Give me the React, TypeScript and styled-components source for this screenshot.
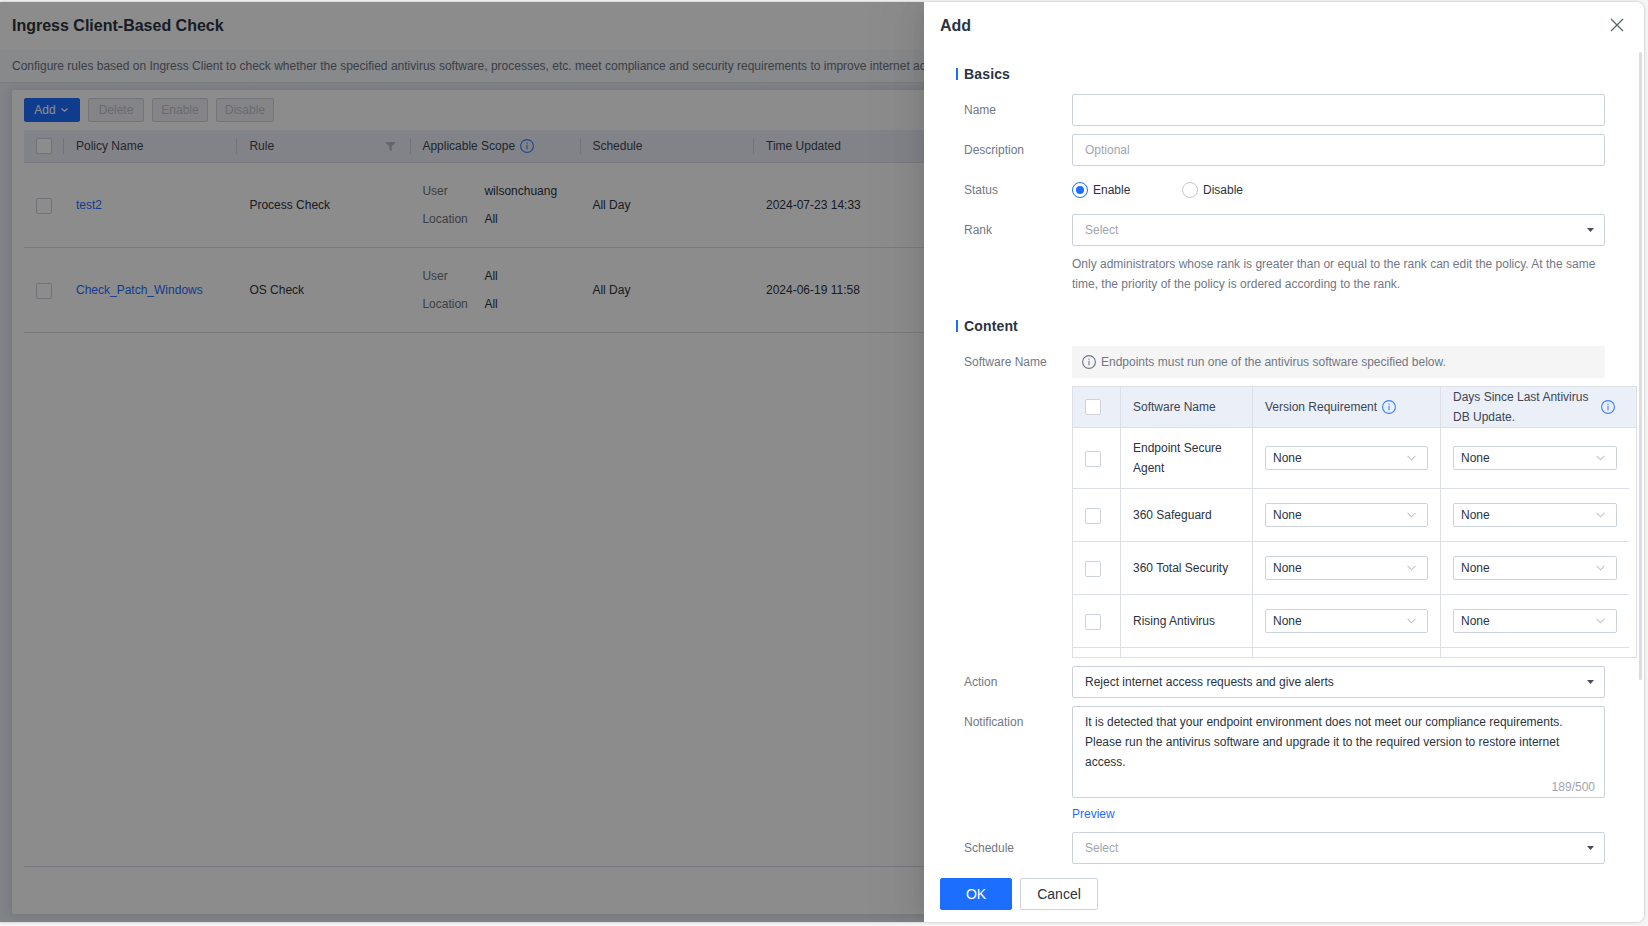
import React from 'react';
import styled, { createGlobalStyle, css } from 'styled-components';

const GlobalStyle = createGlobalStyle`
  * { box-sizing: border-box; }
  html, body { margin: 0; padding: 0; }
  body {
    width: 1648px;
    height: 926px;
    overflow: hidden;
    background: #f5f5f5;
    color: #2b3340;
    font-family: "Liberation Sans", Arial, sans-serif;
    font-size: 12px;
    line-height: 20px;
  }
  button, input, textarea { font: inherit; color: inherit; }
`;

const Page = styled.div`
  width: 1648px;
  height: 926px;
  padding: 2px 4px 4px 0;
`;

const Frame = styled.div`
  position: relative;
  height: 920px;
  overflow: hidden;
  border-radius: 0 8px 8px 0;
  display: flex;
  flex-direction: column;
`;

const Shell = styled.div`
  border-radius: 0 8px 8px 0;
  box-shadow: 0 0 3px rgba(0, 0, 0, 0.28);
`;

const Main = styled.main`
  width: 1600px;
  height: 920px;
  background: #ebeef6;
  display: flex;
  flex-direction: column;
`;

const PageTitle = styled.h1`
  flex: none;
  margin: 0;
  height: 48px;
  padding: 0 12px;
  background: #fff;
  font-size: 16px;
  line-height: 47px;
`;

const PageNote = styled.div`
  flex: none;
  height: 33px;
  padding: 0 12px;
  background: #f7f9fc;
  border-bottom: 1px solid #e1e4ea;
  line-height: 32px;
  color: #6b7280;
  white-space: nowrap;
`;

const Card = styled.section`
  flex: 1;
  margin: 7px 12px 8px;
  padding: 8px 12px 0;
  background: #fff;
  border-radius: 2px;
  box-shadow: 0 0 12px rgba(40, 45, 80, 0.16);
  display: flex;
  flex-direction: column;
`;

const Toolbar = styled.div`
  display: flex;
  gap: 8px;
  margin-bottom: 8px;
`;

const ToolButton = styled.button<{ $primary?: boolean; $width: number }>`
  display: flex;
  align-items: center;
  justify-content: center;
  gap: 5px;
  width: ${(p) => p.$width}px;
  height: 24px;
  padding: 0;
  border-radius: 2px;
  border: 1px solid #d0d5df;
  background: #f0f1f4;
  color: #bfc3cc;
  ${(p) => p.$primary && css`
    padding-right: 2px;
    border-color: #1c6eff;
    background: #1c6eff;
    color: #fff;
  `}
`;

const policyColumns = '40px 173px 174px 170px 173px 1fr';

const PolicyHead = styled.div`
  display: grid;
  grid-template-columns: ${policyColumns};
  height: 33px;
  align-items: center;
  background: #edeff7;
  border-bottom: 1px solid #dcdfe8;
  border-radius: 2px 2px 0 0;
  color: #3d4554;
`;

const HeadCell = styled.div`
  display: flex;
  align-items: center;
  gap: 5px;
  height: 16px;
  padding: 0 15px 0 12px;
  border-right: 1px solid #cfd3dc;
  &:last-child { border-right: 0; }
`;

const CheckHeadCell = styled(HeadCell)`
  padding: 0;
`;

const FilterHeadCell = styled(HeadCell)`
  justify-content: space-between;
  padding-left: 12.4px;
`;

const ScopeHeadCell = styled(HeadCell)`
  padding-left: 11.4px;
`;

const PolicyRow = styled.div`
  display: grid;
  grid-template-columns: ${policyColumns};
  height: 85px;
  align-items: center;
  border-bottom: 1px solid #dcdfe5;
`;

const Cell = styled.div<{ $left?: number }>`
  padding-left: ${(p) => p.$left ?? 12}px;
`;

const PolicyLink = styled.a`
  color: #1c6eff;
`;

const Scope = styled.dl`
  display: grid;
  grid-template-columns: 62px 1fr;
  row-gap: 8px;
  margin: 0;
  dt { color: #6b7280; }
  dd { margin: 0; }
`;

const CardFooter = styled.div`
  margin-top: auto;
  height: 48px;
  border-top: 1px solid #d9dbe5;
`;

const CheckBox = styled.span<{ $low?: boolean; $left?: number }>`
  display: block;
  flex: none;
  width: 16px;
  height: 16px;
  margin-left: ${(p) => p.$left ?? 12}px;
  margin-top: ${(p) => (p.$low ? 2 : 0)}px;
  border: 1px solid #cdd2dc;
  border-radius: 2px;
  background: #fff;
`;

const Mask = styled.div`
  position: absolute;
  inset: 0;
  background: linear-gradient(to right, rgba(0, 0, 0, 0.45) 1600px, #fff 1600px);
  display: flex;
  justify-content: flex-end;
`;

const Drawer = styled.aside`
  width: 720px;
  height: 920px;
  background: #fff;
  box-shadow: -6px 0 16px -8px rgba(0, 0, 0, 0.08), -9px 0 28px 0 rgba(0, 0, 0, 0.05),
    -12px 0 48px 16px rgba(0, 0, 0, 0.03);
  display: flex;
  flex-direction: column;
`;

const DrawerHead = styled.header`
  flex: none;
  display: flex;
  align-items: flex-start;
  justify-content: space-between;
  height: 48px;
  padding: 0 20.5px 0 16px;
  h2 { margin: 0; font-size: 16px; line-height: 47px; }
  svg { margin-top: 16.4px; }
`;

const DrawerBody = styled.div`
  flex: 1;
  min-height: 0;
  display: flex;
  overflow: hidden;
`;

const Form = styled.form`
  width: 713px;
  flex: none;
  padding: 14px 0 0 32px;
`;

const ScrollTrack = styled.div`
  width: 5px;
  padding: 2px 0 0 2px;
`;

const ScrollThumb = styled.div`
  width: 3px;
  height: 628px;
  border-radius: 2px;
  background: #dcdcde;
`;

const SectionTitle = styled.h3<{ $top?: number }>`
  display: flex;
  align-items: center;
  height: 20px;
  margin: ${(p) => p.$top ?? 0}px 0 10px;
  font-size: 14px;
  letter-spacing: 0.15px;
  &::before {
    content: "";
    width: 2px;
    height: 12px;
    margin-right: 6px;
    background: #1c6eff;
  }
`;

const FormRow = styled.div`
  display: flex;
  padding-left: 8px;
  margin-bottom: 8px;
`;

const Label = styled.label`
  flex: none;
  width: 108px;
  line-height: 32px;
  color: #717885;
`;

const Control = styled.div`
  width: 533px;
`;

const TextInput = styled.input`
  display: block;
  width: 100%;
  height: 32px;
  padding: 0 12px;
  border: 1px solid #cdd3dd;
  border-radius: 2px;
  background: #fff;
  outline: none;
  &::placeholder { color: #9fa5b1; opacity: 1; }
`;

const SelectBox = styled.div<{ $empty?: boolean }>`
  display: flex;
  align-items: center;
  justify-content: space-between;
  height: 32px;
  padding: 0 10px 0 12px;
  border: 1px solid #cdd3dd;
  border-radius: 2px;
  color: ${(p) => (p.$empty ? '#9fa5b1' : '#2b3340')};
`;

const RadioGroup = styled.div`
  display: flex;
  height: 32px;
`;

const Radio = styled.span`
  display: flex;
  align-items: center;
  gap: 5px;
  width: 110px;
`;

const RadioDot = styled.i<{ $on?: boolean }>`
  display: flex;
  align-items: center;
  justify-content: center;
  width: 16px;
  height: 16px;
  border-radius: 50%;
  border: 1px solid ${(p) => (p.$on ? '#1c6eff' : '#c3c8d2')};
  &::after {
    content: "";
    width: 8px;
    height: 8px;
    border-radius: 50%;
    background: ${(p) => (p.$on ? '#1c6eff' : 'transparent')};
  }
`;

const Help = styled.p`
  margin: 8px 0 0;
  color: #717885;
`;

const Notice = styled.div`
  display: flex;
  align-items: center;
  gap: 5px;
  height: 32px;
  padding-left: 10px;
  background: #f5f5f5;
  border-radius: 2px;
  color: #717885;
`;

const SoftwareTable = styled.div`
  width: 565px;
  height: 272px;
  margin-top: 8px;
  border: 1px solid #dcdfe8;
  overflow: hidden;
`;

const softwareColumns = '48px 132px 188px 188px';

const SoftwareHead = styled.div`
  display: grid;
  grid-template-columns: ${softwareColumns};
  height: 41px;
  background: #ebeff8;
  border-bottom: 1px solid #dcdfe8;
  color: #3d4554;
`;

const SoftwareRow = styled.div<{ $height: number }>`
  display: grid;
  grid-template-columns: ${softwareColumns};
  width: 556px;
  height: ${(p) => p.$height}px;
  border-bottom: 1px solid #dcdfe8;
`;

const SoftwareCell = styled.div`
  display: flex;
  align-items: center;
  gap: 5px;
  padding: 0 12px;
  border-right: 1px solid #dcdfe8;
  &:nth-child(4) { border-right: 0; }
`;

const TallHeadCell = styled(SoftwareCell)`
  justify-content: space-between;
  padding-right: 14px;
  span { width: 140px; margin-right: -5px; }
`;

const MiniSelect = styled.div`
  display: flex;
  align-items: center;
  justify-content: space-between;
  flex: 1;
  height: 24px;
  padding: 0 11.5px 0 7px;
  border: 1px solid #cdd3dd;
  border-radius: 2px;
`;

const NotificationBox = styled.div`
  display: flex;
  flex-direction: column;
  justify-content: space-between;
  height: 92px;
  padding: 5px 9px 0 12px;
  border: 1px solid #cdd3dd;
  border-radius: 2px;
`;

const Counter = styled.span`
  align-self: flex-end;
  color: #9fa5b1;
`;

const Preview = styled.a`
  display: block;
  margin: 6px 0 0;
  color: #1c6eff;
`;

const DrawerFoot = styled.footer`
  flex: none;
  display: flex;
  gap: 8px;
  height: 52px;
  padding: 8px 16px;
`;

const FootButton = styled.button<{ $primary?: boolean }>`
  width: ${(p) => (p.$primary ? 72 : 78)}px;
  height: 32px;
  padding: 0;
  border: 1px solid ${(p) => (p.$primary ? '#1c6eff' : '#cdd3dd')};
  border-radius: 2px;
  background: ${(p) => (p.$primary ? '#1c6eff' : '#fff')};
  color: ${(p) => (p.$primary ? '#fff' : '#2b3340')};
  font-size: 14px;
`;

const IconSvg = styled.svg`
  display: block;
  flex: none;
`;

const InfoIcon = ({ color = '#3b82ff' }: { color?: string }) => (
  <IconSvg width="14" height="14" viewBox="0 0 14 14" fill="none">
    <circle cx="7" cy="7" r="6.4" stroke={color} strokeWidth="1.1" />
    <path d="M7 5.8V10.2M7 3.6V4.8" stroke={color} strokeWidth="1.1" />
  </IconSvg>
);

const Chevron = () => (
  <IconSvg width="9" height="6" viewBox="0 0 9 6" fill="none">
    <path d="M0.6 0.8L4.5 4.8L8.4 0.8" stroke="#bfc4cd" strokeWidth="1.1" />
  </IconSvg>
);

const ButtonChevron = () => (
  <IconSvg width="7" height="4" viewBox="0 0 7 4" fill="none">
    <path d="M0.5 0.5L3.5 3.2L6.5 0.5" stroke="#fff" strokeWidth="1.2" />
  </IconSvg>
);

const Caret = () => (
  <IconSvg width="7" height="4" viewBox="0 0 7 4">
    <path d="M0 0H7L3.5 4Z" fill="#464e5e" />
  </IconSvg>
);

const FilterIcon = () => (
  <IconSvg width="9" height="9" viewBox="0 0 9 9">
    <path d="M0 0H9V1.2L5.8 4.2V9L3.4 8V4.2L0 1.2Z" fill="#b4b9c4" />
  </IconSvg>
);

const CloseIcon = () => (
  <IconSvg width="14" height="14" viewBox="0 0 14 14" fill="none">
    <path d="M1 1L13 13M13 1L1 13" stroke="#5f6673" strokeWidth="1.4" />
  </IconSvg>
);

const policies = [
  { name: 'test2', rule: 'Process Check', user: 'wilsonchuang', updated: '2024-07-23 14:33' },
  { name: 'Check_Patch_Windows', rule: 'OS Check', user: 'All', updated: '2024-06-19 11:58' },
];

const software = [
  { name: 'Endpoint Secure Agent', height: 61 },
  { name: '360 Safeguard', height: 53 },
  { name: '360 Total Security', height: 53 },
  { name: 'Rising Antivirus', height: 53 },
];

function PolicyPage() {
  return (
    <Main>
      <PageTitle>Ingress Client-Based Check</PageTitle>
      <PageNote>
        Configure rules based on Ingress Client to check whether the specified antivirus software,
        processes, etc. meet compliance and security requirements to improve internet access
      </PageNote>
      <Card>
        <Toolbar>
          <ToolButton $primary $width={56}>
            Add <ButtonChevron />
          </ToolButton>
          <ToolButton $width={56}>Delete</ToolButton>
          <ToolButton $width={56}>Enable</ToolButton>
          <ToolButton $width={58}>Disable</ToolButton>
        </Toolbar>
        <PolicyHead>
          <CheckHeadCell><CheckBox /></CheckHeadCell>
          <HeadCell>Policy Name</HeadCell>
          <FilterHeadCell>Rule <FilterIcon /></FilterHeadCell>
          <ScopeHeadCell>Applicable Scope <InfoIcon /></ScopeHeadCell>
          <ScopeHeadCell>Schedule</ScopeHeadCell>
          <HeadCell>Time Updated</HeadCell>
        </PolicyHead>
        {policies.map((p) => (
          <PolicyRow key={p.name}>
            <CheckBox $low />
            <Cell><PolicyLink>{p.name}</PolicyLink></Cell>
            <Cell $left={12.4}>{p.rule}</Cell>
            <Cell $left={11.4}>
              <Scope>
                <dt>User</dt><dd>{p.user}</dd>
                <dt>Location</dt><dd>All</dd>
              </Scope>
            </Cell>
            <Cell $left={11.4}>All Day</Cell>
            <Cell>{p.updated}</Cell>
          </PolicyRow>
        ))}
        <CardFooter />
      </Card>
    </Main>
  );
}

function AddDrawer() {
  return (
    <Drawer>
      <DrawerHead>
        <h2>Add</h2>
        <CloseIcon />
      </DrawerHead>
      <DrawerBody>
        <Form>
          <SectionTitle>Basics</SectionTitle>
          <FormRow>
            <Label>Name</Label>
            <Control><TextInput /></Control>
          </FormRow>
          <FormRow>
            <Label>Description</Label>
            <Control><TextInput placeholder="Optional" /></Control>
          </FormRow>
          <FormRow>
            <Label>Status</Label>
            <Control>
              <RadioGroup>
                <Radio><RadioDot $on />Enable</Radio>
                <Radio><RadioDot />Disable</Radio>
              </RadioGroup>
            </Control>
          </FormRow>
          <FormRow>
            <Label>Rank</Label>
            <Control>
              <SelectBox $empty>Select <Caret /></SelectBox>
              <Help>
                Only administrators whose rank is greater than or equal to the rank can edit the
                policy. At the same time, the priority of the policy is ordered according to the rank.
              </Help>
            </Control>
          </FormRow>
          <SectionTitle $top={22}>Content</SectionTitle>
          <FormRow>
            <Label>Software Name</Label>
            <Control>
              <Notice>
                <InfoIcon color="#717885" />
                Endpoints must run one of the antivirus software specified below.
              </Notice>
              <SoftwareTable>
                <SoftwareHead>
                  <SoftwareCell><CheckBox $left={0} /></SoftwareCell>
                  <SoftwareCell>Software Name</SoftwareCell>
                  <SoftwareCell>Version Requirement <InfoIcon /></SoftwareCell>
                  <TallHeadCell>
                    <span>Days Since Last Antivirus DB Update.</span>
                    <InfoIcon />
                  </TallHeadCell>
                </SoftwareHead>
                {software.map((s) => (
                  <SoftwareRow key={s.name} $height={s.height}>
                    <SoftwareCell><CheckBox $low $left={0} /></SoftwareCell>
                    <SoftwareCell>{s.name}</SoftwareCell>
                    <SoftwareCell><MiniSelect>None <Chevron /></MiniSelect></SoftwareCell>
                    <SoftwareCell><MiniSelect>None <Chevron /></MiniSelect></SoftwareCell>
                  </SoftwareRow>
                ))}
                <SoftwareRow $height={53}>
                  <SoftwareCell />
                  <SoftwareCell />
                  <SoftwareCell />
                  <SoftwareCell />
                </SoftwareRow>
              </SoftwareTable>
            </Control>
          </FormRow>
          <FormRow>
            <Label>Action</Label>
            <Control>
              <SelectBox>Reject internet access requests and give alerts <Caret /></SelectBox>
            </Control>
          </FormRow>
          <FormRow>
            <Label>Notification</Label>
            <Control>
              <NotificationBox>
                <span>
                  It is detected that your endpoint environment does not meet our compliance
                  requirements. Please run the antivirus software and upgrade it to the required
                  version to restore internet access.
                </span>
                <Counter>189/500</Counter>
              </NotificationBox>
              <Preview>Preview</Preview>
            </Control>
          </FormRow>
          <FormRow>
            <Label>Schedule</Label>
            <Control>
              <SelectBox $empty>Select <Caret /></SelectBox>
            </Control>
          </FormRow>
        </Form>
        <ScrollTrack><ScrollThumb /></ScrollTrack>
      </DrawerBody>
      <DrawerFoot>
        <FootButton $primary>OK</FootButton>
        <FootButton>Cancel</FootButton>
      </DrawerFoot>
    </Drawer>
  );
}

export default function App() {
  return (
    <Page>
      <GlobalStyle />
      <Shell>
        <Frame>
          <PolicyPage />
          <Mask>
            <AddDrawer />
          </Mask>
        </Frame>
      </Shell>
    </Page>
  );
}
